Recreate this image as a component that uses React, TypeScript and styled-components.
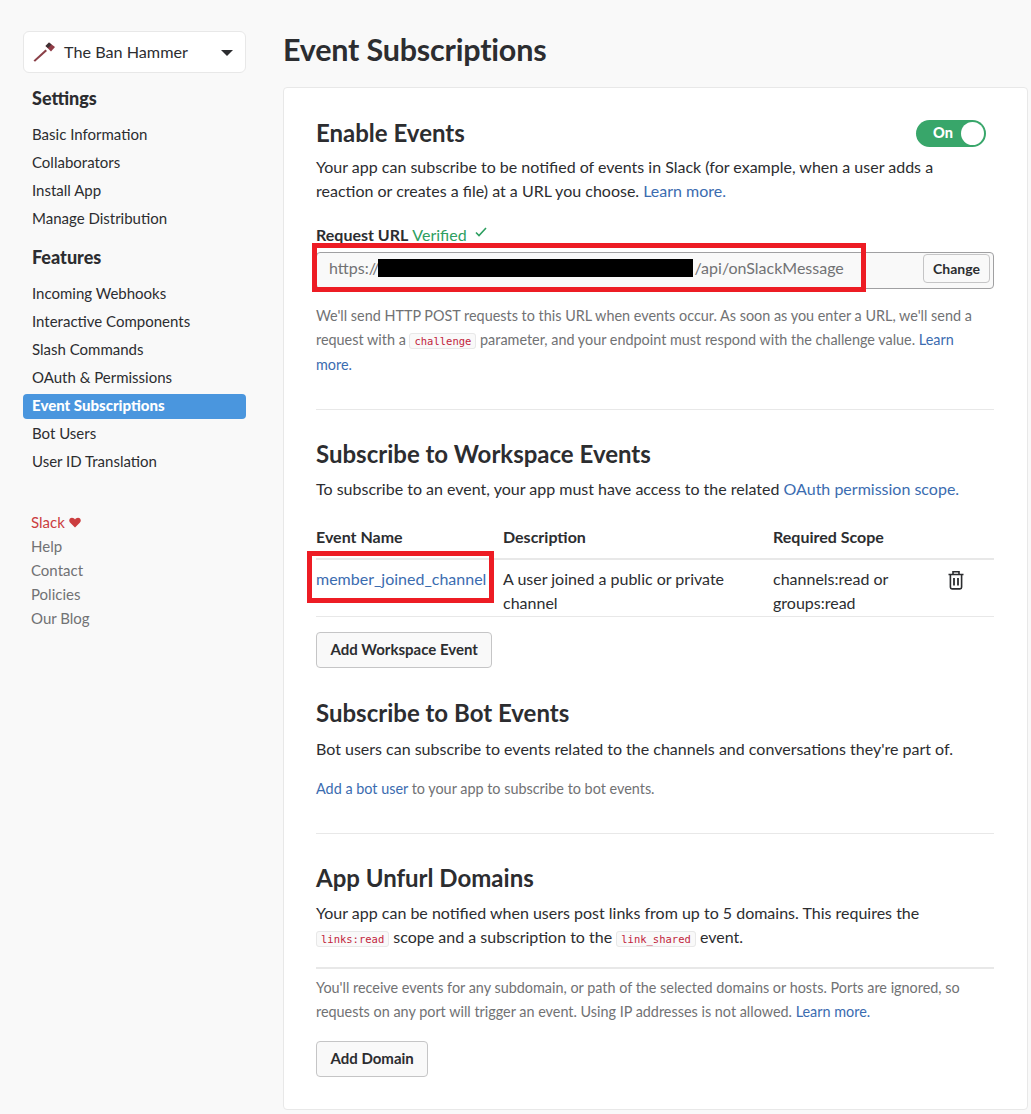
import React from 'react';
import styled, { createGlobalStyle } from 'styled-components';

const GlobalStyle = createGlobalStyle`
  html, body {
    margin: 0;
    padding: 0;
    background: #f9f9f9;
    color: #2c2d30;
    font-family: Lato, "Liberation Sans", sans-serif;
    font-size: 15px;
    line-height: 24px;
  }
  * { box-sizing: border-box; }
`;

const Page = styled.div`
  display: flex;
  align-items: flex-start;
  width: 1031px;
  height: 1114px;
  overflow: hidden;
  padding: 31px 0 0 23px;
`;

const Sidebar = styled.aside`
  width: 223px;
  flex: none;
  margin-right: 37px;
`;

const TeamPicker = styled.div`
  display: flex;
  align-items: center;
  height: 42px;
  padding: 0 12px 0 9px;
  background: #fff;
  border: 1px solid #e8e8e8;
  border-radius: 6px;
  font-size: 16.2px;
  margin-bottom: 12px;
`;

const TeamName = styled.span`
  flex: 1;
  margin-left: 9px;
`;

const Caret = styled.span`
  width: 0;
  height: 0;
  border-left: 6px solid transparent;
  border-right: 6px solid transparent;
  border-top: 6px solid #2c2d30;
  margin-top: 2px;
`;

const NavTitle = styled.h3`
  margin: 0 0 11px 9px;
  font-size: 18px;
  font-weight: 900;
  line-height: 26px;
`;

const NavList = styled.nav`
  display: flex;
  flex-direction: column;
  gap: 4px;
  margin-bottom: 14px;
`;

const NavItem = styled.a<{ $active?: boolean }>`
  display: block;
  height: ${(p) => (p.$active ? 25 : 24)}px;
  margin: ${(p) => (p.$active ? '1px 0 -2px' : 0)};
  padding-left: 9px;
  border-radius: 4px;
  font-size: 15px;
  line-height: ${(p) => (p.$active ? 22 : 24)}px;
  font-weight: ${(p) => (p.$active ? 900 : 400)};
  color: ${(p) => (p.$active ? '#fff' : '#2c2d30')};
  background: ${(p) => (p.$active ? '#4a96de' : 'transparent')};
`;

const FooterLinks = styled.div`
  display: flex;
  flex-direction: column;
  margin: 37px 0 0 8px;
`;

const FooterLink = styled.a<{ $red?: boolean }>`
  display: flex;
  align-items: center;
  gap: 4px;
  font-size: 15px;
  line-height: 24px;
  color: ${(p) => (p.$red ? '#cb3d3f' : '#717274')};
`;

const Main = styled.main`
  width: 745px;
  flex: none;
`;

const PageTitle = styled.h1`
  margin: 0 0 19px;
  font-size: 30.5px;
  line-height: 37px;
  font-weight: 700;
  letter-spacing: -0.2px;
`;

const Card = styled.section`
  height: 1023px;
  padding: 27px 33px 0 32px;
  background: #fff;
  border: 1px solid #e8e8e8;
  border-radius: 4px;
`;

const Heading = styled.h2<{ $top?: number; $bottom?: number }>`
  margin: ${(p) => p.$top ?? 0}px 0 ${(p) => p.$bottom ?? 5}px;
  font-size: 24px;
  line-height: 36px;
  font-weight: 700;
`;

const HeadingRow = styled.div`
  display: flex;
  justify-content: space-between;
  align-items: center;
  margin-bottom: 4px;
  padding-right: 8px;

  ${Heading} {
    margin: 0;
  }
`;

const Toggle = styled.div`
  display: flex;
  align-items: center;
  justify-content: space-between;
  width: 70px;
  height: 27px;
  padding: 0 2px 0 17px;
  border-radius: 14px;
  background: #38a66a;
  color: #fff;
  font-size: 14.5px;
  font-weight: 900;
`;

const Knob = styled.span`
  width: 23px;
  height: 23px;
  border-radius: 50%;
  background: #fff;
`;

const Text = styled.p<{ $bottom?: number }>`
  margin: 0 0 ${(p) => p.$bottom ?? 0}px;
  font-size: 16px;
  line-height: 24px;
`;

const Link = styled.a`
  color: #3b6cb0;
`;

const UrlLabel = styled.div`
  display: flex;
  align-items: center;
  margin-top: 20px;
  height: 24px;
  font-size: 16px;
  font-weight: 700;
`;

const Verified = styled.span`
  margin-left: 4px;
  color: #2d9f60;
  font-weight: 400;
`;

const CheckIcon = styled.svg`
  margin: -6px 0 0 8px;
`;

const UrlField = styled.div`
  position: relative;
  display: flex;
  align-items: center;
  justify-content: space-between;
  height: 37px;
  margin-top: 5px;
  padding: 0 3px 5px 12px;
  background: #f9f9f9;
  border: 1px solid #a0a0a2;
  border-radius: 4px;
  color: #717274;
  font-size: 16px;
`;

const UrlText = styled.span`
  position: relative;
`;

const UrlPath = styled.span`
  margin-left: 315px;
`;

const Redaction = styled.span`
  position: absolute;
  left: 49px;
  top: 3px;
  width: 315px;
  height: 18px;
  background: #000;
`;

const SmallButton = styled.button`
  height: 29px;
  padding: 0 9px;
  background: #f9f9f9;
  border: 1px solid #c5c5c6;
  border-radius: 4px;
  color: #2c2d30;
  font-family: inherit;
  font-size: 14px;
  font-weight: 700;
`;

const RedBox = styled.span<{ $w: number; $h: number; $l: number; $t: number }>`
  position: absolute;
  left: ${(p) => p.$l}px;
  top: ${(p) => p.$t}px;
  width: ${(p) => p.$w}px;
  height: ${(p) => p.$h}px;
  border: 5px solid #ed1c24;
  pointer-events: none;
`;

const Help = styled.p<{ $top?: number }>`
  margin: ${(p) => p.$top ?? 0}px 0 0;
  font-size: 14.4px;
  line-height: 24px;
  color: #717274;
`;

const Code = styled.code`
  padding: 1px 4px;
  background: #f9f9f9;
  border: 1px solid #e8e8e8;
  border-radius: 3px;
  color: #c2253c;
  font-family: "DejaVu Sans Mono", "Liberation Mono", monospace;
  font-size: 10.5px;
`;

const Divider = styled.hr<{ $top: number; $bottom: number }>`
  margin: ${(p) => p.$top}px 0 ${(p) => p.$bottom}px;
  border: 0;
  border-top: 1px solid #e8e8e8;
`;

const EventTable = styled.div`
  position: relative;
  margin-top: 24px;
`;

const TableRow = styled.div<{ $head?: boolean }>`
  display: grid;
  grid-template-columns: 187px 270px 174px 47px;
  height: ${(p) => (p.$head ? 35 : 57)}px;
  padding-top: ${(p) => (p.$head ? 0 : 7)}px;
  border-bottom: ${(p) => (p.$head ? '2px solid #e8e8e8' : '1px solid #e8e8e8')};
  font-size: 16px;
  line-height: 24px;
  font-weight: ${(p) => (p.$head ? 700 : 400)};
`;

const TrashIcon = styled.svg`
  margin-top: 3px;
`;

const ActionButton = styled.button<{ $top: number }>`
  display: block;
  height: 36px;
  margin-top: ${(p) => p.$top}px;
  padding: 0 13.5px 2px;
  background: #f9f9f9;
  border: 1px solid #c5c5c6;
  border-radius: 4px;
  color: #2c2d30;
  font-family: inherit;
  font-size: 15px;
  font-weight: 700;
`;

const SolidRule = styled.hr`
  margin: 16px 0 0;
  border: 0;
  border-top: 2px solid #e8e8e8;
`;

const settings = ['Basic Information', 'Collaborators', 'Install App', 'Manage Distribution'];
const features = [
  'Incoming Webhooks',
  'Interactive Components',
  'Slash Commands',
  'OAuth & Permissions',
  'Event Subscriptions',
  'Bot Users',
  'User ID Translation',
];

const Hammer = () => (
  <svg width="22" height="20" viewBox="0 0 22 20">
    <path d="M0.5 18.5 12.5 7.5l1.5 1.6L2 19.8z" fill="#8a3f47" />
    <path d="M12.5 4 16 0.5l6 4.5-4 4.5z" fill="#8f3b46" />
    <path d="M12.5 4 16 0.5l2.5 1.9-3.5 3.6z" fill="#3d3335" />
  </svg>
);

const Heart = () => (
  <svg width="12" height="11" viewBox="0 0 12 11">
    <path d="M6 10.5 1 5.6C-.6 3.8.4.8 3 .8c1.3 0 2.4.8 3 1.8.6-1 1.7-1.8 3-1.8 2.6 0 3.6 3 2 4.8z" fill="#cb3d3f" />
  </svg>
);

const App = () => (
  <>
    <GlobalStyle />
    <Page>
      <Sidebar>
        <TeamPicker>
          <Hammer />
          <TeamName>The Ban Hammer</TeamName>
          <Caret />
        </TeamPicker>
        <NavTitle>Settings</NavTitle>
        <NavList>
          {settings.map((item) => (
            <NavItem key={item}>{item}</NavItem>
          ))}
        </NavList>
        <NavTitle>Features</NavTitle>
        <NavList>
          {features.map((item) => (
            <NavItem key={item} $active={item === 'Event Subscriptions'}>
              {item}
            </NavItem>
          ))}
        </NavList>
        <FooterLinks>
          <FooterLink $red>
            Slack <Heart />
          </FooterLink>
          <FooterLink>Help</FooterLink>
          <FooterLink>Contact</FooterLink>
          <FooterLink>Policies</FooterLink>
          <FooterLink>Our Blog</FooterLink>
        </FooterLinks>
      </Sidebar>
      <Main>
        <PageTitle>Event Subscriptions</PageTitle>
        <Card>
          <HeadingRow>
            <Heading>Enable Events</Heading>
            <Toggle>
              On
              <Knob />
            </Toggle>
          </HeadingRow>
          <Text>
            Your app can subscribe to be notified of events in Slack (for example, when a user adds a reaction or
            creates a file) at a URL you choose. <Link>Learn more.</Link>
          </Text>
          <UrlLabel>
            Request URL<Verified>Verified</Verified>
            <CheckIcon width="12" height="10" viewBox="0 0 12 10">
              <path d="M1 5.5 4 8.5 11 1" fill="none" stroke="#2d9f60" strokeWidth="1.6" />
            </CheckIcon>
          </UrlLabel>
          <UrlField>
            <UrlText>
              https://
              <Redaction />
              <UrlPath>/api/onSlackMessage</UrlPath>
            </UrlText>
            <SmallButton>Change</SmallButton>
            <RedBox $l={-5} $t={-10} $w={554} $h={49} />
          </UrlField>
          <Help $top={15}>
            We'll send HTTP POST requests to this URL when events occur. As soon as you enter a URL, we'll send a
            request with a <Code>challenge</Code> parameter, and your endpoint must respond with the challenge value.{' '}
            <Link>
              Learn
              <br />
              more.
            </Link>
          </Help>
          <Divider $top={32} $bottom={26} />
          <Heading>Subscribe to Workspace Events</Heading>
          <Text>
            To subscribe to an event, your app must have access to the related <Link>OAuth permission scope.</Link>
          </Text>
          <EventTable>
            <TableRow $head>
              <span>Event Name</span>
              <span>Description</span>
              <span>Required Scope</span>
              <span />
            </TableRow>
            <TableRow>
              <Link>member_joined_channel</Link>
              <span>
                A user joined a public or private
                <br />
                channel
              </span>
              <span>
                channels:read or
                <br />
                groups:read
              </span>
              <TrashIcon width="18" height="20" viewBox="0 0 18 20">
                <path
                  d="M1.5 4.5h15M6 4.5V1.8h6v2.7M3.4 4.5v12.8a1.6 1.6 0 0 0 1.6 1.6h8a1.6 1.6 0 0 0 1.6-1.6V4.5"
                  fill="none"
                  stroke="#2c2d30"
                  strokeWidth="1.6"
                />
                <path d="M7 8v7.5M11 8v7.5" fill="none" stroke="#2c2d30" strokeWidth="1.8" />
              </TrashIcon>
            </TableRow>
            <RedBox $l={-9} $t={26} $w={187} $h={52} />
          </EventTable>
          <ActionButton $top={15}>Add Workspace Event</ActionButton>
          <Heading $top={27} $bottom={6}>Subscribe to Bot Events</Heading>
          <Text $bottom={16}>Bot users can subscribe to events related to the channels and conversations they're part of.</Text>
          <Help>
            <Link>Add a bot user</Link> to your app to subscribe to bot events.
          </Help>
          <Divider $top={32} $bottom={26} />
          <Heading>App Unfurl Domains</Heading>
          <Text>
            Your app can be notified when users post links from up to 5 domains. This requires the{' '}
            <Code>links:read</Code> scope and a subscription to the <Code>link_shared</Code> event.
          </Text>
          <SolidRule />
          <Help $top={7}>
            You'll receive events for any subdomain, or path of the selected domains or hosts. Ports are ignored, so
            requests on any port will trigger an event. Using IP addresses is not allowed. <Link>Learn more.</Link>
          </Help>
          <ActionButton $top={17}>Add Domain</ActionButton>
        </Card>
      </Main>
    </Page>
  </>
);

export default App;
